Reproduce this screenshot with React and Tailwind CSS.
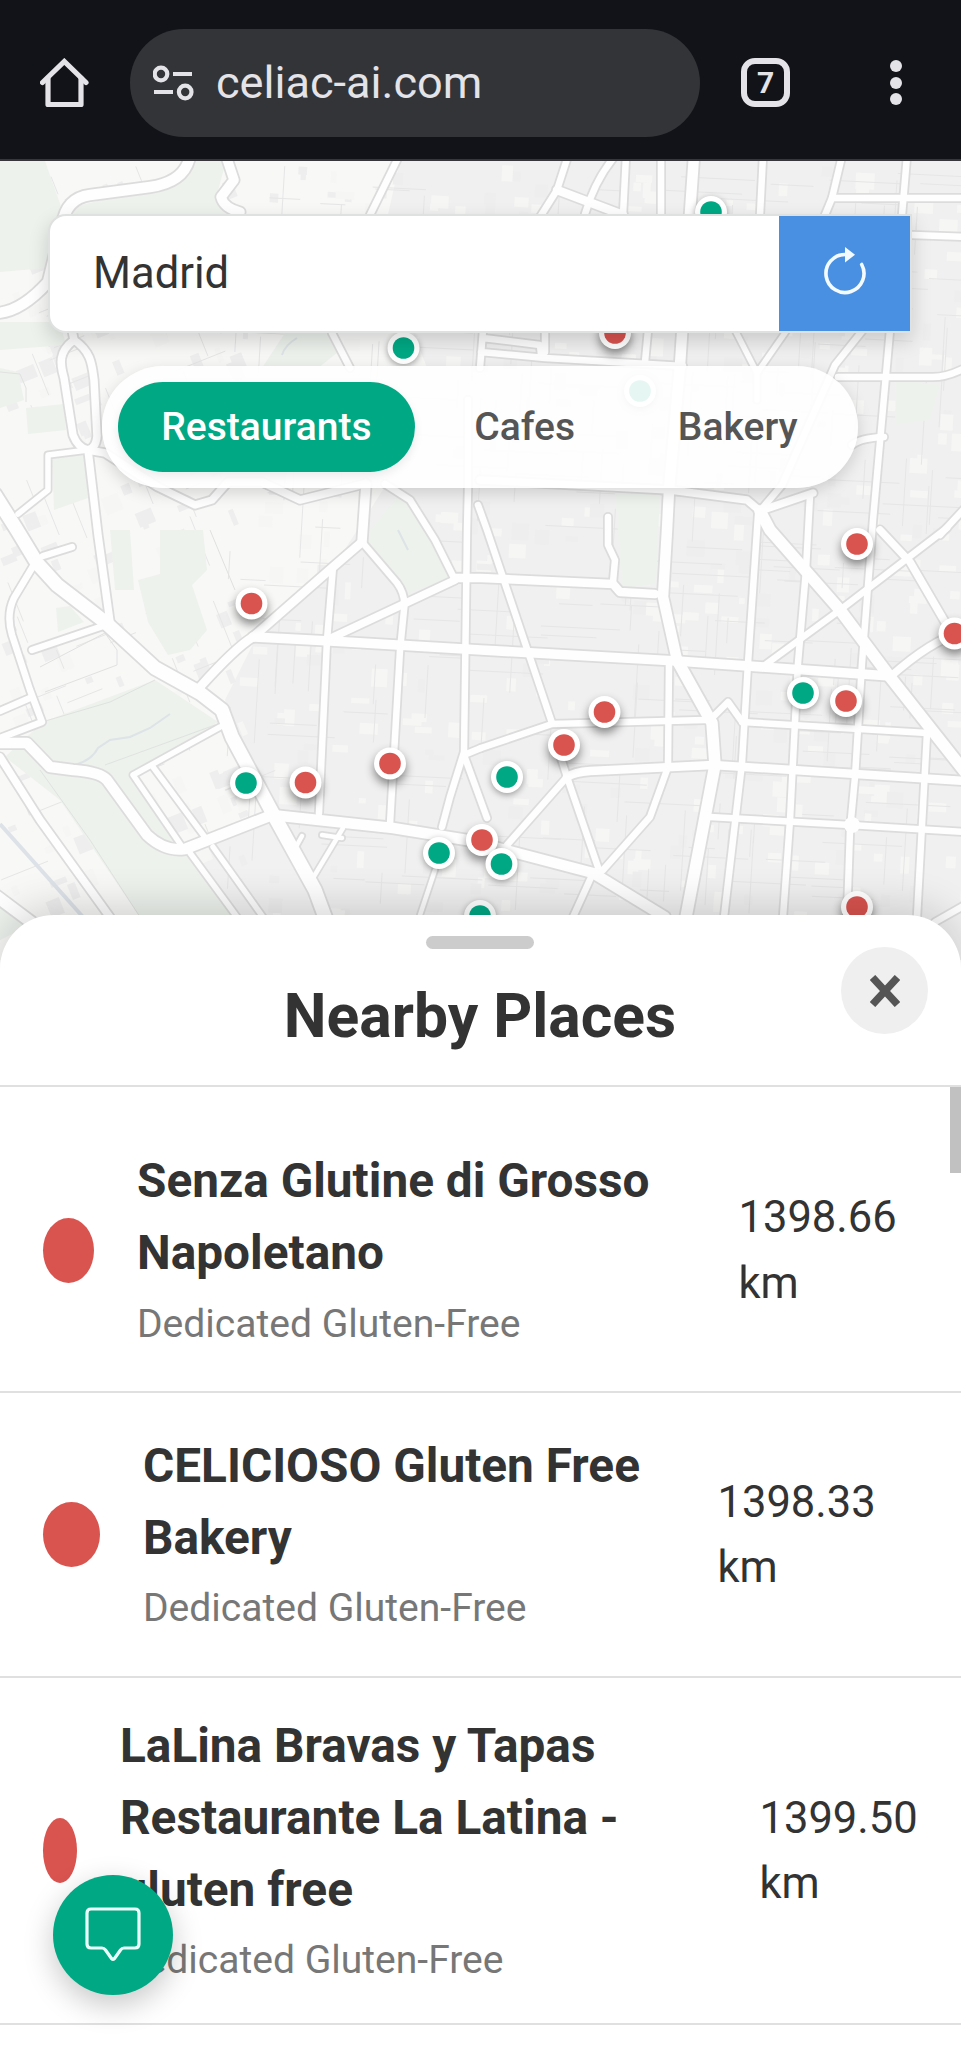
import React, { useState } from 'react'

const parks = [
  'M0 161H45L64 215 46 268 0 272Z',
  'M70 208 140 190 192 161H226L216 198 240 216H66Z',
  'M0 322H60L66 345 0 350Z',
  'M285 333H330L338 352 318 368H262Z',
  'M0 368 18 372 24 400 0 408Z',
  'M52 458 84 452 88 498 54 510Z',
  'M110 530 130 530 134 590 115 590Z',
  'M160 530 203 530 207 570 192 585 207 630 190 650 168 655 148 622 138 580 160 574Z',
  'M43 722 155 680 218 722 133 775 185 850 237 917H140L60 800 5 757Z',
  'M370 530 400 494 427 530 452 578 403 595 365 545Z',
  'M56 608 70 606 84 622 58 632Z',
  'M615 490 660 492 656 584 622 588Z',
  'M896 380 940 385 930 420 895 425Z',
  'M26 408 64 404 66 430 28 434Z',
  'M0 900 30 925 0 940Z',
]

// [path, width]
const roads = [
  ['M-5 495L17 530 37 563 57 585 105 622 155 668 200 693 222 710 232 737 272 812 315 890 328 925', 13],
  ['M72 330 74 340M74 340C58 352 60 364 64 378L73 435Q78 448 88 450', 7],
  ['M74 340C92 352 92 366 94 380L97 436Q96 448 88 450L98 535 110 622', 7],
  ['M88 450 48 455 48 490 18 514', 5],
  ['M88 450 105 453 158 487 195 505 212 500 228 482 262 482 300 500 364 484', 7],
  ['M366 484 362 542', 9],
  ['M385 484 410 500 435 540 455 580', 6],
  ['M468 400V488L467 530 464 752 450 797 442 827', 6],
  ['M464 755 487 818M481 748 464 755', 6],
  ['M362 542 333 567 253 637Q235 648 200 687', 8],
  ['M362 542 397 583Q406 595 404 610L400 650 390 824', 6],
  ['M333 567 327 640 319 813', 6],
  ['M455 580 327 640', 7],
  ['M455 578H481L613 584 620 592 655 594', 8],
  ['M253 637 330 641 481 650 677 661 890 676', 9],
  ['M272 815 393 828 467 840 513 852 593 873 665 917', 10],
  ['M272 815 185 849Q165 852 147 835L107 780Q100 772 73 770L50 767 27 743H-5', 10],
  ['M0 738 42 722 30 690 12 635Q6 615 14 598L35 563', 6],
  ['M0 711 30 698M43 556 72 547M32 650 103 626', 6],
  ['M220 727 133 775 183 848M153 767 207 840M190 853 237 917M213 847 263 917', 5],
  ['M0 757 40 820 112 920', 7],
  ['M-5 895 35 925', 11],
  ['M343 828 313 878M435 870 420 915M322 835 342 838M302 836 297 845', 4],
  ['M-5 313Q20 313 48 282L62 225Q66 198 90 195L150 187Q185 182 190 156', 10],
  ['M226 156 234 180 221 197Q224 208 240 212', 9],
  ['M399 156 370 215M332 333 350 368', 6],
  ['M568 156 557 190 540 217M615 156Q595 180 585 214', 6],
  ['M557 190 623 215', 8],
  ['M626 156 623 215M661 156V215M763 156 760 215', 6],
  ['M694 156 690 213 680 365 669 490 667 530 663 597 677 660', 10],
  ['M842 156 832 198 825 215M907 156 902 215', 6],
  ['M832 198H965M912 235 965 237', 6],
  ['M890 330 873 520 870 560 862 663 855 777 850 830 847 917', 6],
  ['M735 330 757 373 787 330M757 373V400', 5],
  ['M863 330 835 365 782 485 760 511', 6],
  ['M838 377H930Q945 378 965 368M852 445Q860 438 884 437', 6],
  ['M648 330 645 362M483 330 480 368M481 352 545 358 683 366M483 338 540 345 541 355M545 333V352', 6],
  ['M480 480 670 490 747 500 760 511 813 493', 7],
  ['M760 511 770 530 840 610 890 677 965 772', 11],
  ['M758 515 748 663 742 763 724 917', 6],
  ['M810 495 806 570 798 663 790 820 783 917', 6],
  ['M608 517V545L615 560 613 582', 6],
  ['M478 505 487 530 552 723', 6],
  ['M481 748 552 724 705 720', 6],
  ['M669 663 668 765', 6],
  ['M677 660 712 723 715 765 686 917', 11],
  ['M712 718 728 702 743 723M742 722 927 733', 6],
  ['M567 777Q575 772 590 771L713 765 965 781', 8],
  ['M710 817 850 825 965 832', 6],
  ['M927 733 917 917', 6],
  ['M567 777 507 845M560 755 567 777 600 873M668 767 650 817 603 870M593 873 573 917', 6],
  ['M947 528 840 610 765 665', 6],
  ['M880 530 910 562 945 622M965 632Q935 637 890 677', 7],
  ['M965 905 935 922M965 508 940 535', 6],
]

const markers = [
  [711, 212, 'g'], [615, 333, 'r'], [403.500, 348, 'g'], [640, 391, 'g'], [857, 544, 'r'],
  [251.500, 603.500, 'r'], [954.500, 633.500, 'r'], [803, 693, 'g'], [846, 701, 'r'], [604.500, 712, 'r'],
  [564, 745, 'r'], [507, 777, 'g'], [390, 763.500, 'r'], [246, 783, 'g'], [305.500, 782.500, 'r'],
  [439, 853, 'g'], [482, 840, 'r'], [501.500, 864, 'g'], [480, 916, 'g'], [857, 907, 'r'],
]

const places = [
  { name: ['Senza Glutine di Grosso', 'Napoletano'], km: '1398.66', row: 'h-[284px]', dot: 'w-[51px]', text: 'w-[558px]' },
  { name: ['CELICIOSO Gluten Free', 'Bakery'], km: '1398.33', row: 'h-[285px]', dot: 'w-[57px]', text: 'w-[531px]' },
  { name: ['LaLina Bravas y Tapas', 'Restaurante La Latina -', 'gluten free'], km: '1399.50', row: 'h-[347px]', dot: 'w-[34px]', text: 'w-[596px]' },
]

// Small seeded generator so the blocks land in the same place on every render
const seeded = (seed) => () => {
  seed = (seed * 16807) % 2147483647
  return seed / 2147483647
}

const makeBlocks = () => {
  const rand = seeded(42)
  const blocks = []
  for (let i = 0; i < 700; i++) {
    const x = rand() * 961
    const y = 165 + rand() * 750
    blocks.push({ x, y, w: 5 + rand() * 14, h: 5 + rand() * 13, light: x > 240 ? rand() > 0.35 : rand() > 0.6, angle: x > 240 ? 3 : -22 })
  }
  return blocks
}

const makeStreets = () => {
  const rand = seeded(7)
  let d = ''
  for (let i = 0; i < 320; i++) {
    const x = 230 + rand() * 720
    const y = 165 + rand() * 740
    const len = 25 + rand() * 60
    d += rand() > 0.5 ? `M${x} ${y}l${len} ${len * 0.05}` : `M${x} ${y}l${-len * 0.06} ${len}`
  }
  for (let i = 0; i < 70; i++) {
    const x = rand() * 230
    const y = 165 + rand() * 740
    const len = 15 + rand() * 40
    d += rand() > 0.5 ? `M${x} ${y}l${len} ${-len * 0.4}` : `M${x} ${y}l${len * 0.4} ${len}`
  }
  return d
}

const blocks = makeBlocks()
const streets = makeStreets()

const CityMap = () => (
  <svg className="absolute inset-0 w-full h-full" viewBox="0 161 961 799" preserveAspectRatio="xMidYMin slice">
    <rect x="0" y="161" width="961" height="799" fill="#f8f8f7" />
    <path d="M400 161H961V960H330L275 815 225 700 255 640 335 565 440 400 380 250Z" fill="#f0f0f0" />
    <path d="M190 853 272 818 330 920 235 920Z" fill="#f1f1f1" />
    {blocks.map((b, i) => (
      <rect key={i} x={b.x} y={b.y} width={b.w} height={b.h} fill={b.light ? '#f6f6f5' : '#eeeeee'} transform={`rotate(${b.angle} ${b.x} ${b.y})`} />
    ))}
    <path d={streets} fill="none" stroke="#e6e6e6" strokeWidth="1" />
    {parks.map((d, i) => (
      <path key={i} d={d} fill="#edf2ed" />
    ))}
    <path d="M75 765Q92 760 98 748L110 740 130 737 150 728 170 714M282 355Q285 345 297 338M398 530 408 550" fill="none" stroke="#dde3e6" strokeWidth="2" />
    <path d="M0 824 83 917" stroke="#dce2e8" strokeWidth="4" />
    <path d="M40 770 90 840 140 917M105 765 160 745 215 725M0 372 20 374 26 388V402M42 722 110 702 155 680M40 667 105 633 117 650V665L45 692M210 530 235 590" fill="none" stroke="#e0e2e0" strokeWidth="1" />
    <g fill="none" stroke="#dcdcdc" strokeLinejoin="round" strokeLinecap="round">
      {roads.map(([d, w], i) => <path key={i} d={d} strokeWidth={w + 4} />)}
    </g>
    <g fill="none" stroke="#fefefe" strokeLinejoin="round" strokeLinecap="round">
      {roads.map(([d, w], i) => <path key={i} d={d} strokeWidth={w + 0.5} />)}
    </g>
    <circle cx="852" cy="825" r="8" fill="#fefefe" />
    {markers.map(([x, y, kind], i) => (
      <g key={i} className={kind === 'r' ? 'drop-shadow-[0_5px_5px_rgba(0,0,0,0.45)]' : 'drop-shadow-[0_2px_3px_rgba(0,0,0,0.35)]'}>
        <circle cx={x} cy={y} r="16" fill="#ffffff" />
        <circle cx={x} cy={y} r="10.8" fill={kind === 'r' ? '#d9534f' : '#00a884'} />
      </g>
    ))}
  </svg>
)

const BrowserBar = () => (
  <div className="h-[161px] bg-[#121318] border-b-2 border-[#37363b] flex items-center shrink-0 pt-[6px] pl-10">
    <svg className="w-[49px] h-[50px] shrink-0" viewBox="0 0 49 50" fill="none" stroke="#e3e3e8" strokeWidth="5.2" strokeLinejoin="round" strokeLinecap="round">
      <path d="M2.5 24.5 24.3 3.5 46 24.5" strokeLinejoin="miter" />
      <path d="M8 20V46.500H41V20" />
    </svg>
    <div className="ml-[41px] w-[570px] h-[108px] rounded-full bg-[#333438] flex items-center pl-[23px]">
      <svg className="w-[41px] h-[36px]" viewBox="0 0 41 36" fill="none" stroke="#e3e3e8" strokeWidth="4.2">
        <circle cx="8" cy="9" r="6.300" />
        <path d="M20 9H39M1 27H20" />
        <circle cx="32.200" cy="27" r="6.300" />
      </svg>
      <span className="ml-[22px] text-[45.100px] leading-none text-[#e3e3e8]">celiac-ai.com</span>
    </div>
    <div className="ml-[41px] size-[49px] rounded-[14px] border-[6px] border-[#e3e3e8] flex items-center justify-center text-[30px] leading-none font-bold text-[#e3e3e8]">7</div>
    <div className="ml-[100px] flex flex-col gap-[4.500px]">
      <span className="size-[12px] rounded-full bg-[#e3e3e8]" />
      <span className="size-[12px] rounded-full bg-[#e3e3e8]" />
      <span className="size-[12px] rounded-full bg-[#e3e3e8]" />
    </div>
  </div>
)

const PlaceRow = ({ place }) => (
  <div className={`${place.row} shrink-0 border-b-2 border-[#e0e0e0] flex items-center pl-[42.500px]`}>
    <span className={`${place.dot} h-[65px] shrink-0 rounded-[50%] bg-[#d9534f]`} />
    <div className={`${place.text} ml-[43.500px] shrink-0`}>
      <h3 className="text-[47.750px] leading-[71.800px] font-bold text-[#333333]">
        {place.name.map((line) => <span key={line} className="block whitespace-nowrap">{line}</span>)}
      </h3>
      <p className="mt-[5px] text-[39.050px] leading-[58.700px] text-[#777777]">Dedicated Gluten-Free</p>
    </div>
    <div className="ml-[43.500px] pt-[1px] text-[43.500px] leading-[65.300px] text-[#333333]">
      {place.km}<br />km
    </div>
  </div>
)

const App = () => {
  const [category, setCategory] = useState('Restaurants')

  return (
    <div className="relative w-[961px] h-[2048px] overflow-hidden bg-white font-['Roboto',sans-serif] flex flex-col">
      <BrowserBar />

      {/* Map */}
      <div className="relative h-[754px] shrink-0">
        <div className="absolute inset-x-0 top-0 h-[799px]"><CityMap /></div>
        <div className="relative pt-[53px] px-[48px]">
          <div className="h-[119px] w-[864px] flex rounded-l-[18px] border-2 border-[#dfe0e0] bg-white shadow-[0_8px_20px_rgba(0,0,0,0.16)]">
            <span className="flex-1 pl-[43px] text-[43.500px] leading-[116px] text-[#333333]">Madrid</span>
            <button className="w-[131px] bg-[#4a90e2] flex items-center justify-center">
              <svg className="w-[44px] h-[50px] mb-[5px]" viewBox="0 0 44 50" fill="none">
                <path d="M38.700 18.500A19 19 0 1 1 22 8.500" stroke="#f4fbff" strokeWidth="3.600" strokeLinecap="round" />
                <path d="M22 1V16.500L32 8.700Z" fill="#f4fbff" />
              </svg>
            </button>
          </div>
          <div className="mt-[33px] ml-[54px] w-[756px] h-[122px] p-[16px] flex gap-[16.300px] rounded-full bg-white/90 shadow-[0_5px_16px_rgba(0,0,0,0.15)]">
            {['Restaurants', 'Cafes', 'Bakery'].map((item) => (
              <button
                key={item}
                onClick={() => setCategory(item)}
                className={`px-[43.200px] rounded-full text-[39.050px] font-medium ${category === item ? 'bg-[#00a884] text-white shadow-[0_4px_10px_rgba(0,0,0,0.08)]' : 'text-[#555555]'}`}
              >
                {item}
              </button>
            ))}
          </div>
        </div>
      </div>

      {/* Nearby sheet */}
      <div className="relative flex-1 bg-white rounded-t-[54px] shadow-[0_-8px_40px_rgba(0,0,0,0.16)] flex flex-col">
        <div className="relative h-[172px] shrink-0 border-b-2 border-[#e0e0e0] flex flex-col items-center pt-[21px] pr-[1px]">
          <span className="w-[108px] h-[13px] rounded-full bg-[#cccccc]" />
          <h2 className="mt-[21.500px] text-[60.600px] leading-[92px] font-bold text-[#333333]">Nearby Places</h2>
          <button className="absolute right-[33px] top-[32px] size-[87px] rounded-full bg-[#efefef] flex items-center justify-center">
            <svg className="w-[30px] h-[32px]" viewBox="0 0 30 32" stroke="#555555" strokeWidth="7.500">
              <path d="M2.500 2.500 27.500 29.500M27.500 2.500 2.500 29.500" />
            </svg>
          </button>
        </div>
        <div className="relative flex-1 pt-[22px] flex flex-col">
          {places.map((place) => <PlaceRow key={place.km} place={place} />)}
          <span className="absolute right-0 top-0 w-[11px] h-[86px] bg-[#c1c1c1]" />
        </div>
      </div>

      {/* Chat button */}
      <button className="absolute left-[53px] top-[1875px] size-[120px] rounded-full bg-[#00a884] flex items-center justify-center shadow-[0_10px_30px_rgba(0,0,0,0.22)]">
        <svg className="w-[56px] h-[54px] mb-[2px]" viewBox="0 0 56 54" fill="none" stroke="#e8fffa" strokeWidth="3.200" strokeLinejoin="round">
          <path d="M6 2H50Q54 2 54 6V37Q54 41 50 41H39Q37 41 35.500 43L29.500 51.500Q28 53 26.500 51.500L20.500 43Q19 41 17 41H6Q2 41 2 37V6Q2 2 6 2Z" />
        </svg>
      </button>
    </div>
  )
}

export default App
